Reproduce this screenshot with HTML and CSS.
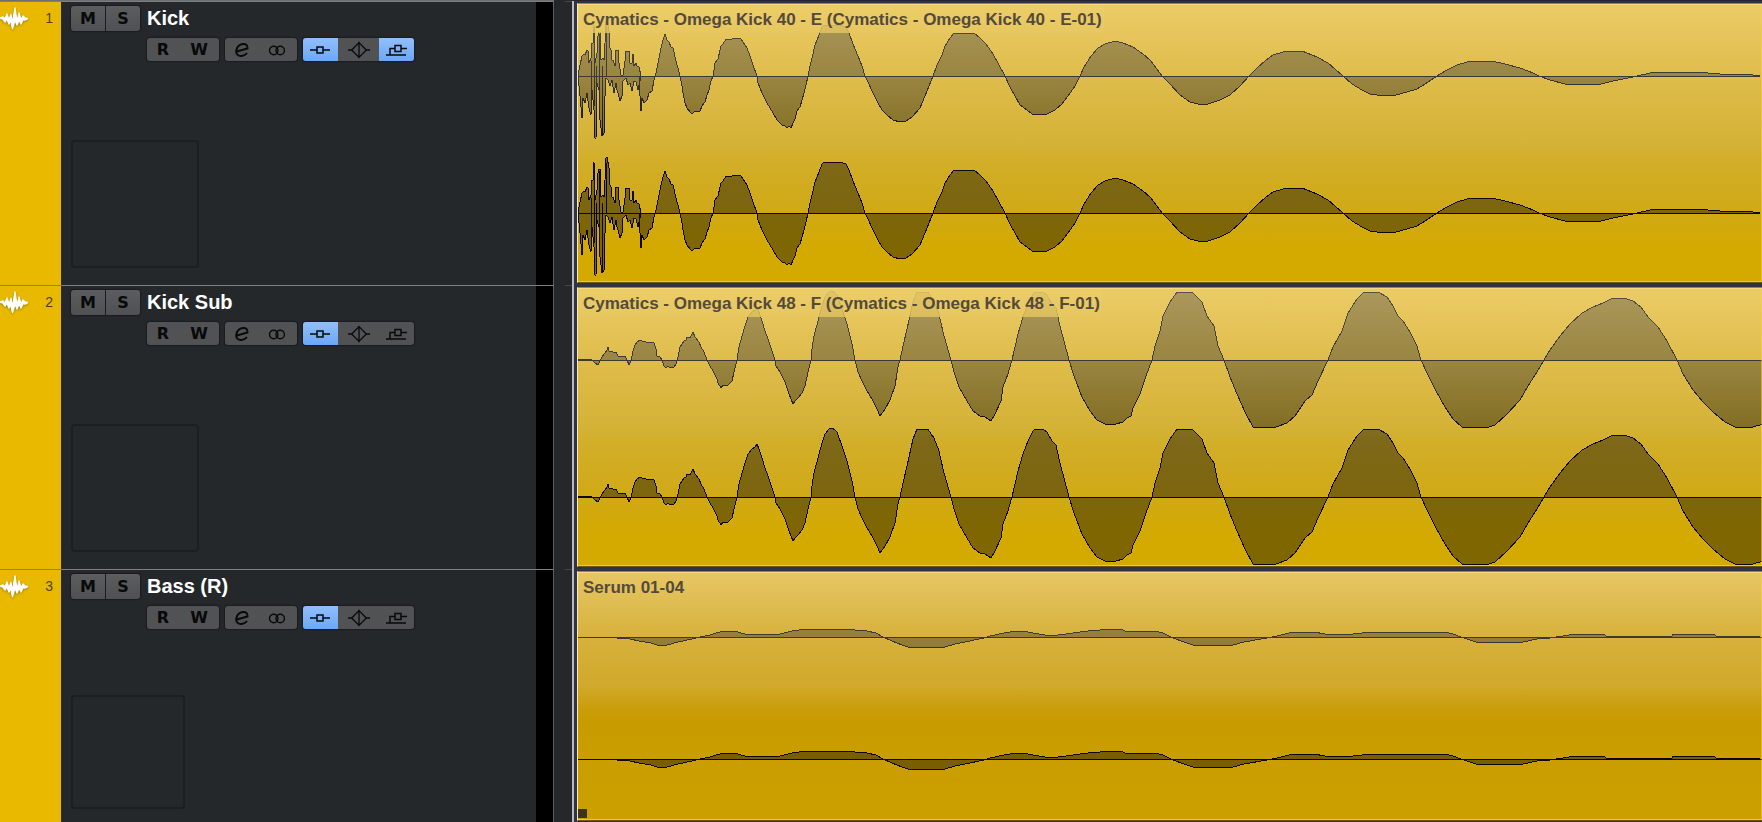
FILE: index.html
```html
<!DOCTYPE html>
<html lang="en">
<head>
    <meta charset="UTF-8">
    <meta name="viewport" content="width=device-width, initial-scale=1.0">
    <title>Project - Tracks</title>
    <link rel="stylesheet" href="styles.css">
</head>
<body>
    <!-- Shared icons and waveforms -->
    <svg class="defs" aria-hidden="true">
        <defs>
            <symbol id="icon-wave" viewBox="0 0 28 24">
                <path d="M0 12 L3 11 L5 13 L7 8 L9 14 L11 8.500 L12.500 17 L15 2 L17 16 L19 7 L21 14 L23 10 L25 12 L28 12.500 L25 14 L23 13.500 L21 18 L19 14 L17 19 L15 14 L12.500 22.500 L10.500 14 L9 18 L7 13 L5 16 L3 13 Z" fill="#fff" stroke="#fff" stroke-width="1.400" stroke-linejoin="round"/>
            </symbol>
            <symbol id="icon-edit" viewBox="0 0 16 16">
                <path d="M3 9.500 L13.500 6.500 Q13.800 2 9.500 2 Q5.500 2 3.300 5.500 Q1.300 9.500 2.800 12 Q4.500 14.600 8.500 13.800 Q11.500 13 13 11" fill="none" stroke="#08090a" stroke-width="1.900"/>
            </symbol>
            <symbol id="icon-link" viewBox="0 0 18 16">
                <circle cx="5.700" cy="8.500" r="4.200" fill="none" stroke="#08090a" stroke-width="1.400"/>
                <circle cx="12.200" cy="8.500" r="4.200" fill="none" stroke="#08090a" stroke-width="1.400"/>
            </symbol>
            <symbol id="icon-inserts" viewBox="0 0 22 20">
                <path d="M1 10 H8 M14 10 H21 M8 7 H14 V13 H8 Z" fill="none" stroke="#08090a" stroke-width="1.500"/>
            </symbol>
            <symbol id="icon-eq" viewBox="0 0 24 20">
                <path d="M0 10 H4 L12 2 L20 10 H24 M4 10 L12 18 L20 10 M12 1 V19" fill="none" stroke="#08090a" stroke-width="1.400"/>
            </symbol>
            <symbol id="icon-sends" viewBox="0 0 22 20">
                <path d="M0 15 H20 M4 15 V8.500 H9 M15 8.500 H21 M9 5.500 H15 V11.500 H9 Z" fill="none" stroke="#08090a" stroke-width="1.500"/>
            </symbol>

            <path id="wave-kick" vector-effect="non-scaling-stroke" d="M1 0 L3 -11 5 -20 7 -22 8 -21 10 -26 11 -25 12 -13 14 -18 15 -33 16 -33 17 -51 18 -13 20 -23 21 -40 22 -44 23 -44 24 -16 26 -18 27 -16 28 -33 29 -55 30 -56 32 -45 32 -30 34 -26 35 -16 36 -16 38 -10 39 -26 41 -26 42 -13 44 -1 46 -1 48 -15 49 -25 52 -25 53 -13 55 -13 56 -22 57 -10 59 -13 60 -10 62 -9 64 0
                L61 14 59 6 57 5 55 15 53 7 51 9 49 2 46 5 45 20 43 25 41 17 40 14 39 7 37 17 35 4 33 10 31 4 29 2 28 20 27 57 25 60 23 44 22 14 20 7 19 62 18 62 17 34 15 14 14 39 12 32 10 17 8 27 6 22 5 42 3 20 Z
                M17 -40 V30 M19 -10 V60 M22 -42 V20 M25 -10 V58 M29 -50 V0 M14 -15 V30
                M62 0 L63 20 64 35 65 22 67 27 70 24 72 17 75 15 77 4 78 0 79 -3 81 -13 84 -28 86 -36 88 -42 90 -36 92 -34 94 -29 96 -28 99 -15 101 -8 103 0 105 10 106 17 108 27 110 32 113 36 115 38 117 36 123 35 125 30 128 26 130 19 132 14 134 5 136 0 137 -6 138 -13 141 -17 144 -30 146 -32 149 -37 151 -36 155 -37 158 -38 164 -37 166 -34 170 -28 173 -20 176 -11 180 0 181 7 185 17 190 27 196 37 200 44 205 49 208 50 210 52 212 50 214 52 216 47 218 43 220 35 223 31 225 24 227 17 229 9 231 0 233 -10 235 -18 238 -31 242 -41 245 -49 247 -51 263 -51 269 -49 272 -43 276 -32 281 -20 285 -10 288 0 291 6 295 15 300 25 305 34 310 39 316 44 323 46 329 45 335 41 343 32 348 20 352 10 356 0 360 -11 365 -21 368 -30 373 -38 377 -43 397 -43 403 -38 409 -32 416 -22 422 -11 428 0 433 11 438 20 443 29 450 34 455 38 461 39 470 38 478 34 485 28 491 20 498 10 503 0 507 -9 514 -20 521 -28 528 -32 538 -35 546 -33 556 -29 566 -22 573 -16 580 -7 585 0 593 8 603 19 613 26 621 28 631 28 643 24 653 19 663 10 672 0 680 -8 688 -15 696 -21 706 -24 725 -25 740 -19 751 -13 758 -7 766 0 775 8 785 14 793 18 800 19 819 19 830 16 840 13 848 8 860 0 870 -6 880 -11 890 -14 896 -15 915 -15 928 -12 943 -8 956 -3 962 0 973 4 988 8 1024 8 1036 5 1051 2 1060 0 1073 -3 1088 -4 1119 -4 1143 -2 1176 -1 1183 0 Z"/>

            <path id="wave-sub" vector-effect="non-scaling-stroke" d="M1 0 L6 -1 13 -1 16 1 18 3 21 5 23 1 25 -3 28 -7 30 -10 31 -13 32 -9 36 -8 39 -8 41 -4 48 -4 50 0 52 5 54 1 56 -9 58 -15 60 -18 63 -20 65 -19 68 -19 70 -17 73 -18 77 -17 79 -11 80 -4 83 -3 85 0 87 6 89 8 91 6 93 8 97 7 99 4 101 -3 103 -13 107 -19 109 -20 110 -23 113 -22 116 -28 118 -23 122 -18 124 -13 127 -8 130 0 133 6 136 11 140 19 141 23 144 28 146 25 151 25 155 21 157 12 160 0 162 -13 165 -24 168 -34 171 -43 175 -48 178 -50 180 -53 182 -48 185 -39 188 -29 191 -21 195 -9 198 0 199 6 203 12 208 22 212 34 216 44 219 40 221 38 225 33 228 26 231 12 234 0 235 -11 237 -24 241 -39 245 -54 248 -63 252 -68 255 -69 258 -67 260 -65 265 -51 270 -36 275 -16 278 0 281 12 285 21 290 31 295 39 300 49 303 56 308 49 313 40 318 26 321 7 323 0 326 -14 330 -31 336 -58 340 -68 351 -68 354 -63 357 -59 362 -46 366 -28 370 -14 374 0 377 12 382 27 390 41 396 51 403 56 408 57 414 61 418 54 424 41 426 27 431 14 435 0 438 -13 441 -26 446 -43 451 -56 456 -66 458 -68 466 -68 470 -65 475 -56 479 -52 483 -34 487 -19 492 0 497 16 505 37 513 51 520 60 528 64 539 64 546 62 550 58 554 56 556 48 563 34 569 16 575 0 578 -14 583 -29 586 -44 593 -58 600 -68 615 -68 625 -58 630 -44 637 -34 641 -14 647 0 653 17 660 34 668 52 676 67 699 67 710 63 718 56 728 41 735 35 741 21 751 0 756 -13 765 -29 771 -47 780 -61 787 -68 801 -68 810 -63 816 -54 821 -44 826 -39 833 -28 840 -14 844 0 850 13 858 29 868 47 876 59 885 67 912 67 918 65 930 54 943 40 951 26 960 12 967 0 973 -10 983 -24 993 -36 1005 -47 1016 -53 1026 -57 1036 -62 1047 -62 1056 -59 1064 -53 1071 -43 1081 -33 1090 -19 1100 0 1106 14 1116 30 1126 42 1136 52 1148 62 1158 67 1176 67 1186 64 1190 0 Z"/>

            <path id="wave-bass" vector-effect="non-scaling-stroke" d="M39 0 L40 1 53 2 62 4 74 6 80 8 90 8 101 5 115 2 123 0 133 -2 139 -4 147 -6 157 -6 168 -3 203 -3 215 -6 229 -8 273 -8 278 -7 290 -6 299 -4 306 0 315 4 325 8 331 10 368 10 378 7 388 5 407 1 413 -1 427 -4 439 -6 446 -6 456 -4 474 -1 496 -4 511 -6 535 -8 544 -8 548 -6 578 -6 586 -4 594 0 604 4 616 8 656 8 667 5 690 1 700 -1 716 -5 737 -5 748 -3 776 -3 795 -5 868 -5 876 -3 884 0 899 5 946 5 960 2 973 1 986 -1 999 -3 1027 -3 1029 -1 1095 -1 1096 -3 1137 -3 1139 -1 1168 -1 1183 0 Z"/>
        </defs>
    </svg>

    <main class="project">
        <section class="track">
            <div class="track-header">
                <div class="track-color">
                    <svg class="track-type" aria-hidden="true"><use href="#icon-wave"/></svg>
                    <span class="track-number">1</span>
                </div>
                <div class="track-panel">
                    <div class="controls">
                        <div class="btn-group mute-solo">
                            <button type="button" aria-label="Mute">M</button>
                            <button type="button" aria-label="Solo">S</button>
                        </div>
                        <h2 class="track-name">Kick</h2>
                        <div class="control-row">
                            <div class="btn-group automation">
                                <button type="button" aria-label="Read automation">R</button>
                                <button type="button" aria-label="Write automation">W</button>
                            </div>
                            <div class="btn-group channel-edit">
                                <button type="button" aria-label="Edit channel"><svg class="icon-small"><use href="#icon-edit"/></svg></button>
                                <button type="button" aria-label="Channel configuration"><svg class="icon-small"><use href="#icon-link"/></svg></button>
                            </div>
                            <div class="btn-group rack">
                                <button type="button" class="active" aria-label="Inserts"><svg><use href="#icon-inserts"/></svg></button>
                                <button type="button" aria-label="Equalizers"><svg><use href="#icon-eq"/></svg></button>
                                <button type="button" class="active" aria-label="Sends"><svg><use href="#icon-sends"/></svg></button>
                            </div>
                        </div>
                    </div>
                    <div class="track-picture"></div>
                </div>
                <div class="track-meter"></div>
            </div>
            <div class="divider"></div>
            <div class="lane">
                <div class="clip">
                    <span class="clip-name">Cymatics - Omega Kick 40 - E (Cymatics - Omega Kick 40 - E-01)</span>
                    <svg class="channel" viewBox="0 -68 1185 137" preserveAspectRatio="none"><use href="#wave-kick"/><path d="M0 0 H1183" vector-effect="non-scaling-stroke"/></svg>
                    <svg class="channel" viewBox="0 -68 1185 137" preserveAspectRatio="none"><use href="#wave-kick"/><path d="M0 0 H1183" vector-effect="non-scaling-stroke"/></svg>
                </div>
            </div>
        </section>

        <section class="track">
            <div class="track-header">
                <div class="track-color">
                    <svg class="track-type" aria-hidden="true"><use href="#icon-wave"/></svg>
                    <span class="track-number">2</span>
                </div>
                <div class="track-panel">
                    <div class="controls">
                        <div class="btn-group mute-solo">
                            <button type="button" aria-label="Mute">M</button>
                            <button type="button" aria-label="Solo">S</button>
                        </div>
                        <h2 class="track-name">Kick Sub</h2>
                        <div class="control-row">
                            <div class="btn-group automation">
                                <button type="button" aria-label="Read automation">R</button>
                                <button type="button" aria-label="Write automation">W</button>
                            </div>
                            <div class="btn-group channel-edit">
                                <button type="button" aria-label="Edit channel"><svg class="icon-small"><use href="#icon-edit"/></svg></button>
                                <button type="button" aria-label="Channel configuration"><svg class="icon-small"><use href="#icon-link"/></svg></button>
                            </div>
                            <div class="btn-group rack">
                                <button type="button" class="active" aria-label="Inserts"><svg><use href="#icon-inserts"/></svg></button>
                                <button type="button" aria-label="Equalizers"><svg><use href="#icon-eq"/></svg></button>
                                <button type="button" aria-label="Sends"><svg><use href="#icon-sends"/></svg></button>
                            </div>
                        </div>
                    </div>
                    <div class="track-picture"></div>
                </div>
                <div class="track-meter"></div>
            </div>
            <div class="divider"></div>
            <div class="lane">
                <div class="clip">
                    <span class="clip-name">Cymatics - Omega Kick 48 - F (Cymatics - Omega Kick 48 - F-01)</span>
                    <svg class="channel" viewBox="0 -68 1185 137" preserveAspectRatio="none"><use href="#wave-sub"/><path d="M0 0 H1185" vector-effect="non-scaling-stroke"/></svg>
                    <svg class="channel" viewBox="0 -68 1185 137" preserveAspectRatio="none"><use href="#wave-sub"/><path d="M0 0 H1185" vector-effect="non-scaling-stroke"/></svg>
                </div>
            </div>
        </section>

        <section class="track">
            <div class="track-header">
                <div class="track-color">
                    <svg class="track-type" aria-hidden="true"><use href="#icon-wave"/></svg>
                    <span class="track-number">3</span>
                </div>
                <div class="track-panel">
                    <div class="controls">
                        <div class="btn-group mute-solo">
                            <button type="button" aria-label="Mute">M</button>
                            <button type="button" aria-label="Solo">S</button>
                        </div>
                        <h2 class="track-name">Bass (R)</h2>
                        <div class="control-row">
                            <div class="btn-group automation">
                                <button type="button" aria-label="Read automation">R</button>
                                <button type="button" aria-label="Write automation">W</button>
                            </div>
                            <div class="btn-group channel-edit">
                                <button type="button" aria-label="Edit channel"><svg class="icon-small"><use href="#icon-edit"/></svg></button>
                                <button type="button" aria-label="Channel configuration"><svg class="icon-small"><use href="#icon-link"/></svg></button>
                            </div>
                            <div class="btn-group rack">
                                <button type="button" class="active" aria-label="Inserts"><svg><use href="#icon-inserts"/></svg></button>
                                <button type="button" aria-label="Equalizers"><svg><use href="#icon-eq"/></svg></button>
                                <button type="button" aria-label="Sends"><svg><use href="#icon-sends"/></svg></button>
                            </div>
                        </div>
                    </div>
                    <div class="track-picture small"></div>
                </div>
                <div class="track-meter"></div>
            </div>
            <div class="divider"></div>
            <div class="lane">
                <div class="clip clip-bass">
                    <span class="clip-name">Serum 01-04</span>
                    <svg class="channel" viewBox="0 -62 1185 122" preserveAspectRatio="none"><use href="#wave-bass"/><path d="M0 0 H1185" vector-effect="non-scaling-stroke"/></svg>
                    <svg class="channel" viewBox="0 -62 1185 122" preserveAspectRatio="none"><use href="#wave-bass"/><path d="M0 0 H1185" vector-effect="non-scaling-stroke"/></svg>
                    <span class="clip-handle"></span>
                </div>
            </div>
        </section>
    </main>
</body>
</html>
```
FILE: styles.css
```css
* {
    margin: 0;
    padding: 0;
    box-sizing: border-box;
}

body {
    background: #25282b;
    font-family: "Liberation Sans", Arial, sans-serif;
    color: #fff;
}

.defs {
    position: absolute;
    width: 0;
    height: 0;
}

.project {
    display: grid;
    grid-template-rows: 284px 284px 1fr;
    min-height: 100vh;
    padding-top: 1px;
}

.track {
    display: grid;
    grid-template-columns: 554px 20px 1fr;
}

/* Track header */
.track-header {
    display: grid;
    grid-template-columns: 61px 1fr 17px;
    border-top: 1px solid #7d8083;
    border-right: 1px solid #5b5e61;
}

.track:first-child .track-header {
    box-shadow: 0 -1px #6c6f72;
}

.track-color {
    display: flex;
    justify-content: space-between;
    align-items: flex-start;
    padding: 4px 8px 0 0;
    background: #e9b900;
}

.track-type {
    width: 28px;
    height: 24px;
    filter: drop-shadow(0 1px 1px rgba(90, 70, 0, 0.5));
}

.track-number {
    font-size: 14px;
    line-height: 24px;
    color: #4f3f10;
}

.track-panel {
    display: flex;
    flex-direction: column;
    justify-content: space-between;
    padding: 4px 10px 17px;
}

.track:last-child .track-panel {
    padding-bottom: 14px;
}

.controls {
    display: grid;
    grid-template-columns: 69px 1fr;
    gap: 7px;
}

.track-name {
    font-size: 20px;
    line-height: 25px;
    white-space: nowrap;
}

.control-row {
    grid-column: 2;
    display: flex;
    gap: 6px;
}

.btn-group {
    display: flex;
    width: 72px;
    height: 23px;
    border-radius: 3px;
    background: #505254;
    box-shadow: 0 0 1px 1px #1a1c1e;
    overflow: hidden;
}

.btn-group button {
    flex: 1;
    display: flex;
    justify-content: center;
    align-items: center;
    border: none;
    background: none;
    color: #08090a;
    font-family: "DejaVu Sans", sans-serif;
    font-size: 16px;
    font-weight: bold;
    line-height: 24px;
    cursor: pointer;
}

.btn-group button:hover {
    filter: brightness(1.1);
}

.btn-group svg {
    width: 22px;
    height: 20px;
}

.btn-group .icon-small {
    width: 18px;
    height: 16px;
}

.mute-solo {
    width: 69px;
    height: 25px;
    background: linear-gradient(#5c5d5f, #4e5052);
}

.mute-solo button + button {
    border-left: 1px solid #1a1c1e;
}

.automation button:first-child {
    flex-grow: 0.8;
}

.channel-edit {
    padding-right: 3px;
}

.btn-group.rack {
    width: 111px;
}

.rack button:nth-child(2) {
    flex-grow: 1.2;
}

.btn-group .active {
    background: linear-gradient(#91bffb, #6ca7f8);
}

.track-picture {
    width: 128px;
    height: 128px;
    border: 2px solid #1c1f21;
    border-radius: 4px;
}

.track-picture.small {
    width: 114px;
    height: 114px;
}

.track-meter {
    background: #000;
}

.divider {
    border-right: 2px solid #bdb9ba;
    background: linear-gradient(90deg, transparent 11px, #45484b 11px) top / 100% 1px no-repeat;
}

/* Arrange area */
.lane {
    padding: 2px 0 2px 3px;
    background: #2f3540;
}

.clip {
    position: relative;
    display: flex;
    flex-direction: column;
    height: 100%;
    padding: 5px 0 1px;
    background: linear-gradient(#e3b525, #d7ac1f 26%, #d3b030 50%, #d0a915 75%, #d4aa00 88%);
    overflow: hidden;
}

.clip-bass {
    padding: 4px 0 2px;
    background: linear-gradient(#ddae21, #cd9e0c 26%, #cea31e 46%, #c89b00 60%, #cda000);
}

/* Light falling from the top, drawn over the upper channel */
.clip::after {
    content: "";
    position: absolute;
    inset: 0;
    border-top: 1px solid #9c8440;
    border-bottom: 1px solid #6e560a;
    border-left: 1px solid #f6e9c4;
    background: linear-gradient(rgba(255, 255, 255, 0.3), rgba(255, 255, 255, 0.2) 26%, rgba(255, 255, 255, 0.03) 50%, rgba(255, 255, 255, 0) 55%);
    box-shadow: inset 0 1px #f8dc7c, inset 0 -1px #f3c63a, inset -1px 0 rgba(255, 214, 80, 0.5);
    pointer-events: none;
}

.channel {
    display: block;
    flex: 1;
    width: 100%;
    min-height: 0;
    fill: rgba(0, 0, 0, 0.4);
    stroke: #0c0800;
    stroke-width: 1px;
    shape-rendering: crispEdges;
    overflow: visible;
}

.clip-name {
    position: absolute;
    top: 3px;
    left: 1px;
    z-index: 1;
    padding: 0 2px 0 5px;
    background: linear-gradient(rgba(236, 205, 104, 0.85), rgba(231, 199, 96, 0.8));
    color: #544a3c;
    font-size: 17px;
    font-weight: bold;
    line-height: 27px;
    white-space: nowrap;
}

.clip-bass .clip-name {
    background: none;
}

.clip-handle {
    position: absolute;
    left: 1px;
    bottom: 3px;
    z-index: 1;
    width: 9px;
    height: 9px;
    background: #403216;
}
```
